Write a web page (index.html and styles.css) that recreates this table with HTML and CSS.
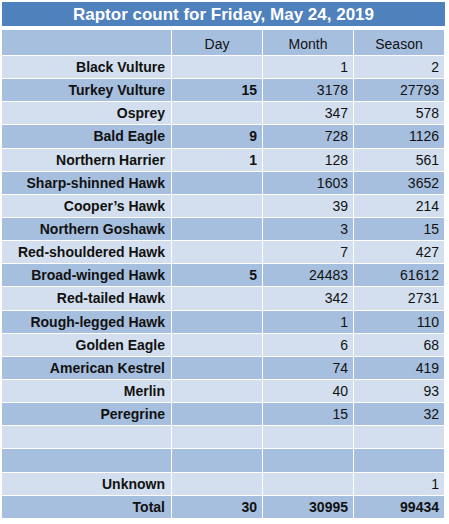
FILE: index.html
```html
<!DOCTYPE html>
<html>
<head>
<meta charset="utf-8">
<link rel="stylesheet" href="styles.css">
</head>
<body>
<div class="wrap">
  <div class="title">Raptor count for Friday, May 24, 2019</div>
  <table class="counts">
    <thead>
      <tr class="head"><th></th><th>Day</th><th>Month</th><th>Season</th></tr>
    </thead>
    <tbody>
      <tr class="light"><td class="name">Black Vulture</td><td class="day"></td><td>1</td><td>2</td></tr>
      <tr class="dark"><td class="name">Turkey Vulture</td><td class="day">15</td><td>3178</td><td>27793</td></tr>
      <tr class="light"><td class="name">Osprey</td><td class="day"></td><td>347</td><td>578</td></tr>
      <tr class="dark"><td class="name">Bald Eagle</td><td class="day">9</td><td>728</td><td>1126</td></tr>
      <tr class="light"><td class="name">Northern Harrier</td><td class="day">1</td><td>128</td><td>561</td></tr>
      <tr class="dark"><td class="name">Sharp-shinned Hawk</td><td class="day"></td><td>1603</td><td>3652</td></tr>
      <tr class="light"><td class="name">Cooper’s Hawk</td><td class="day"></td><td>39</td><td>214</td></tr>
      <tr class="dark"><td class="name">Northern Goshawk</td><td class="day"></td><td>3</td><td>15</td></tr>
      <tr class="light"><td class="name">Red-shouldered Hawk</td><td class="day"></td><td>7</td><td>427</td></tr>
      <tr class="dark"><td class="name">Broad-winged Hawk</td><td class="day">5</td><td>24483</td><td>61612</td></tr>
      <tr class="light"><td class="name">Red-tailed Hawk</td><td class="day"></td><td>342</td><td>2731</td></tr>
      <tr class="dark"><td class="name">Rough-legged Hawk</td><td class="day"></td><td>1</td><td>110</td></tr>
      <tr class="light"><td class="name">Golden Eagle</td><td class="day"></td><td>6</td><td>68</td></tr>
      <tr class="dark"><td class="name">American Kestrel</td><td class="day"></td><td>74</td><td>419</td></tr>
      <tr class="light"><td class="name">Merlin</td><td class="day"></td><td>40</td><td>93</td></tr>
      <tr class="dark"><td class="name">Peregrine</td><td class="day"></td><td>15</td><td>32</td></tr>
      <tr class="light"><td class="name"></td><td class="day"></td><td></td><td></td></tr>
      <tr class="dark"><td class="name"></td><td class="day"></td><td></td><td></td></tr>
      <tr class="light"><td class="name">Unknown</td><td class="day"></td><td></td><td>1</td></tr>
      <tr class="dark total"><td class="name">Total</td><td class="day">30</td><td>30995</td><td>99434</td></tr>
    </tbody>
  </table>
</div>
</body>
</html>
```
FILE: styles.css
```css
html, body {
  margin: 0;
  padding: 0;
  background: #ffffff;
}
body {
  font-family: "Liberation Sans", Arial, Helvetica, sans-serif;
  color: #111111;
}
.wrap {
  padding: 2px 0 0 2px;
  width: 443px;
}
.title {
  height: 24px;
  line-height: 25px;
  background: #4f81bd;
  color: #ffffff;
  font-weight: bold;
  font-size: 17px;
  text-align: center;
  margin-bottom: 3px;
}
.counts {
  border-collapse: separate;
  border-spacing: 1px;
  margin: 0 0 0 -1px;
  table-layout: fixed;
  font-size: 14px;
  line-height: 16px;
}
.counts th, .counts td {
  padding: 0 5px;
  box-sizing: border-box;
}
.counts th {
  height: 25px;
  font-weight: normal;
  text-align: center;
  background: #a7bfde;
  padding-top: 3px;
}
.counts th:first-child { width: 169px; }
.counts th:nth-child(2),
.counts th:nth-child(3),
.counts th:nth-child(4) { width: 90px; }
.counts td {
  height: 22.15px;
  text-align: right;
}
.counts td.name { padding-right: 6px; }
.counts td.name, .counts td.day { font-weight: bold; }
.counts .total td { font-weight: bold; }
.light td { background: #d3dfee; }
.dark td { background: #a7bfde; }
```
